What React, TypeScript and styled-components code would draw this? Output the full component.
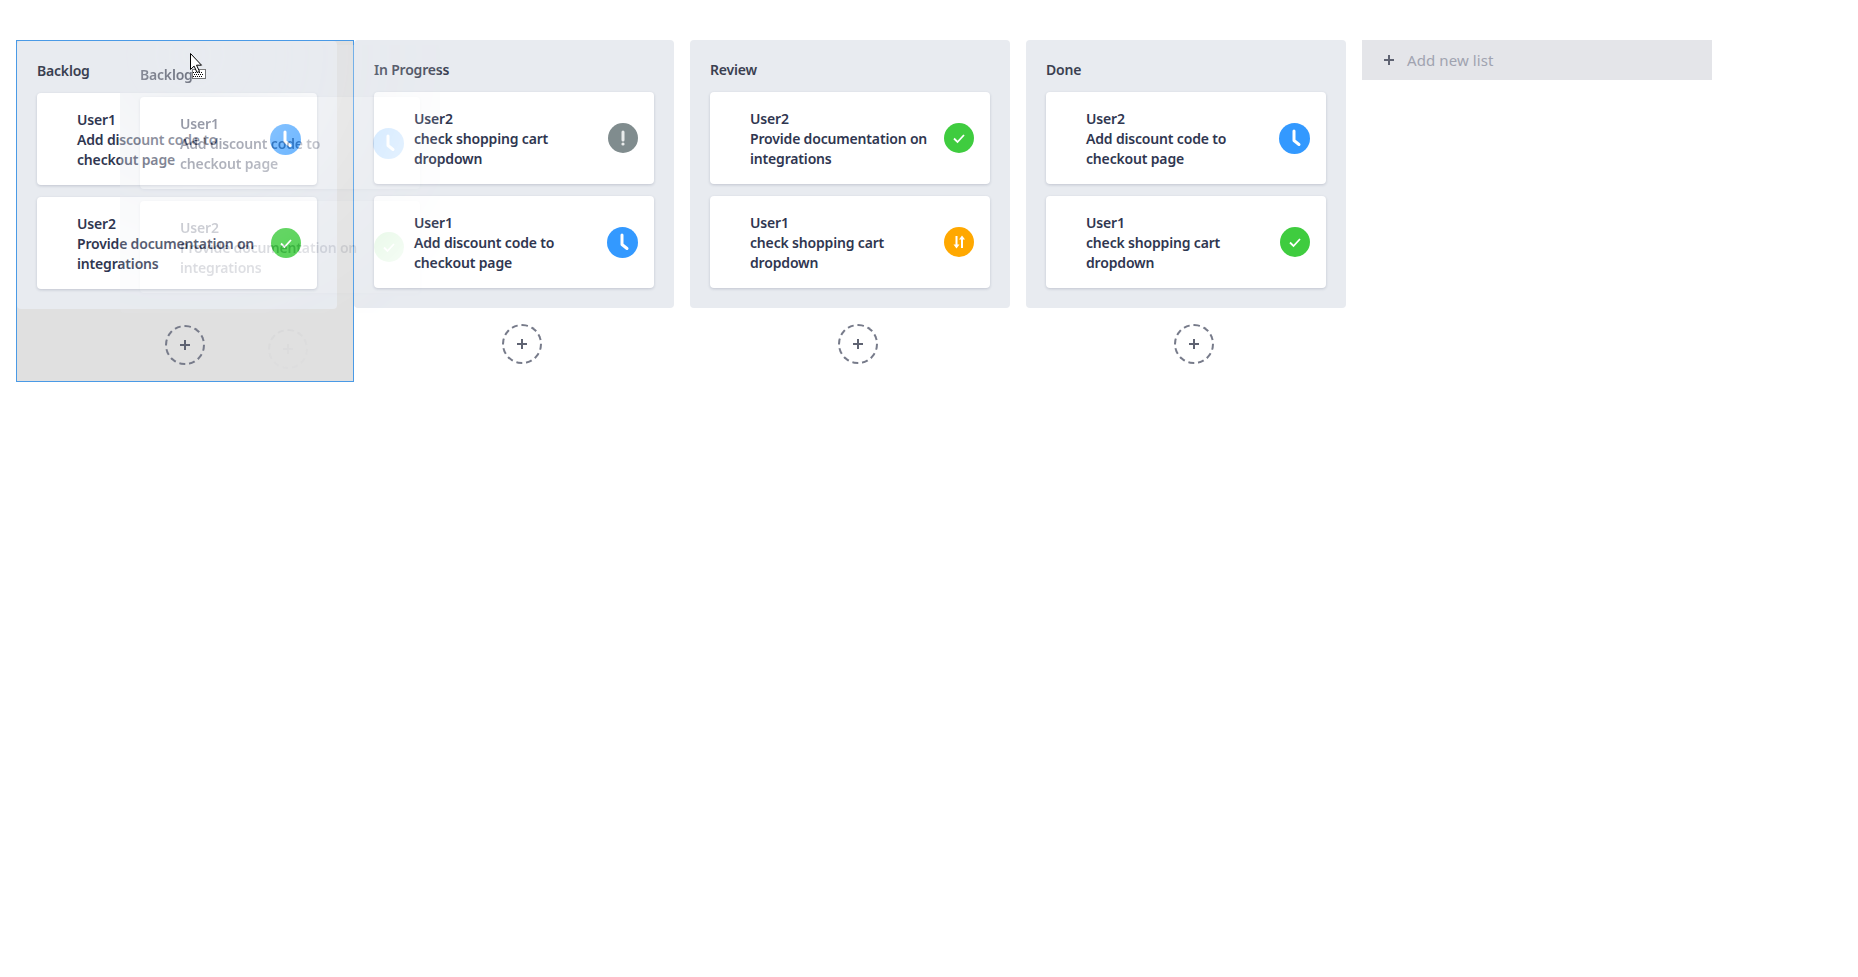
import React from 'react'
import styled, { createGlobalStyle } from 'styled-components'

const GlobalStyle = createGlobalStyle`
	html, body {
		margin: 0;
		background: #fff;
		font-family: "Noto Sans", "Open Sans", sans-serif;
	}
`

const Board = styled.div`
	position: relative;
	display: flex;
	align-items: flex-start;
	min-height: 977px;
	box-sizing: border-box;
	padding: 40px 16px;
	overflow: hidden;
`

const ListSlot = styled.div<{ $dragging?: boolean }>`
	width: 336px;
	flex-shrink: 0;
	${(p) => p.$dragging && 'border: 1px solid #4a9ae6; background: #e0e0e0;'}
`

const Column = styled.div`
	width: 320px;
	box-sizing: border-box;
	padding: 20px;
	background: #e8ebf0;
	border-radius: 4px;
`

const ColumnTitle = styled.div`
	font-size: 14px;
	font-weight: 600;
	line-height: 20px;
	letter-spacing: -0.2px;
	color: #3a3f50;
	margin-bottom: 12px;
`

const Card = styled.div`
	display: flex;
	align-items: center;
	justify-content: space-between;
	height: 92px;
	box-sizing: border-box;
	padding: 16px 16px 16px 40px;
	background: #fff;
	border-radius: 4px;
	box-shadow: 0 1px 3px rgba(40, 50, 80, 0.2);
	& + & {
		margin-top: 12px;
	}
`

const CardText = styled.div`
	width: 190px;
	padding-top: 2px;
	font-size: 14px;
	font-weight: 600;
	line-height: 20px;
	letter-spacing: -0.17px;
	color: #2f3650;
`

const StatusBadge = styled.div<{ $color: string; $size?: number }>`
	display: flex;
	align-items: center;
	justify-content: center;
	flex-shrink: 0;
	width: ${(p) => p.$size || 30}px;
	height: ${(p) => p.$size || 30}px;
	border-radius: 50%;
	background: ${(p) => p.$color};
`

const AddCardButton = styled.div`
	display: flex;
	align-items: center;
	justify-content: center;
	width: 40px;
	height: 40px;
	box-sizing: border-box;
	margin: 16px auto;
	border: 2px dashed #777b8a;
	border-radius: 50%;
	color: #5f6372;
`

const AddListBar = styled.div`
	display: flex;
	align-items: center;
	flex-shrink: 0;
	width: 350px;
	height: 40px;
	box-sizing: border-box;
	padding-left: 21px;
	background: #e4e5e9;
	font-size: 15px;
	letter-spacing: 0.1px;
	color: #a0a3b0;
	svg {
		margin-right: 12px;
		color: #5f6372;
	}
`

// browser drag image: a faded copy of the list that follows the cursor
const DragGhost = styled.div`
	position: absolute;
	left: 120px;
	top: 45px;
	width: 336px;
	pointer-events: none;
	mask-image: radial-gradient(
		circle 340px at 70px 10px,
		rgba(0, 0, 0, 0.74) 0,
		rgba(0, 0, 0, 0.5) 70px,
		rgba(0, 0, 0, 0.34) 130px,
		rgba(0, 0, 0, 0.19) 200px,
		rgba(0, 0, 0, 0.02) 320px
	);
`

const DragCursor = styled.svg`
	position: absolute;
	left: 190px;
	top: 53px;
`

const PlusIcon = () => (
	<svg width="12" height="12" viewBox="0 0 12 12">
		<path d="M6 1v10M1 6h10" stroke="currentColor" strokeWidth="2" fill="none" />
	</svg>
)

const ClockIcon = () => (
	<svg width="31" height="31" viewBox="0 0 31 31">
		<path d="M15 8v9.5l5 4" stroke="#fff" strokeWidth="3" strokeLinecap="round" strokeLinejoin="round" fill="none" />
	</svg>
)

const AlertIcon = () => (
	<svg width="30" height="30" viewBox="0 0 30 30">
		<path d="M15 9v8" stroke="#e9ecec" strokeWidth="3" strokeLinecap="round" fill="none" />
		<circle cx="15" cy="21" r="1.6" fill="#e9ecec" />
	</svg>
)

const CheckIcon = () => (
	<svg width="30" height="30" viewBox="0 0 30 30">
		<path d="M10 15.5l3.5 3.5 6.5-7" stroke="#fff" strokeWidth="1.8" fill="none" />
	</svg>
)

const SwapIcon = () => (
	<svg width="30" height="30" viewBox="0 0 30 30">
		<path d="M12.5 9v10M18 21V11" stroke="#fff" strokeWidth="2" fill="none" />
		<path d="M9.5 17.5h6l-3 4zM15 12.5h6l-3-4z" fill="#fff" />
	</svg>
)

type Status = 'clock' | 'alert' | 'check' | 'swap'

const Badge = ({ status }: { status: Status }) => {
	if (status === 'clock') return <StatusBadge $color="#3399ff" $size={31}><ClockIcon /></StatusBadge>
	if (status === 'alert') return <StatusBadge $color="#808c8e"><AlertIcon /></StatusBadge>
	if (status === 'swap') return <StatusBadge $color="#ffa800"><SwapIcon /></StatusBadge>
	return <StatusBadge $color="#3fcc3f"><CheckIcon /></StatusBadge>
}

const DISCOUNT = 'Add discount code to checkout page'
const DOCS = 'Provide documentation on integrations'
const CART = 'check shopping cart dropdown'

const lists: { title: string; cards: { user: string; text: string; status: Status }[] }[] = [
	{
		title: 'Backlog',
		cards: [
			{ user: 'User1', text: DISCOUNT, status: 'clock' },
			{ user: 'User2', text: DOCS, status: 'check' },
		],
	},
	{
		title: 'In Progress',
		cards: [
			{ user: 'User2', text: CART, status: 'alert' },
			{ user: 'User1', text: DISCOUNT, status: 'clock' },
		],
	},
	{
		title: 'Review',
		cards: [
			{ user: 'User2', text: DOCS, status: 'check' },
			{ user: 'User1', text: CART, status: 'swap' },
		],
	},
	{
		title: 'Done',
		cards: [
			{ user: 'User2', text: DISCOUNT, status: 'clock' },
			{ user: 'User1', text: CART, status: 'check' },
		],
	},
]

const ListContent = ({ list }: { list: (typeof lists)[number] }) => (
	<>
		<Column>
			<ColumnTitle>{list.title}</ColumnTitle>
			{list.cards.map((card) => (
				<Card key={card.user}>
					<CardText>
						<div>{card.user}</div>
						<div>{card.text}</div>
					</CardText>
					<Badge status={card.status} />
				</Card>
			))}
		</Column>
		<AddCardButton>
			<PlusIcon />
		</AddCardButton>
	</>
)

export default function App() {
	return (
		<Board>
			<GlobalStyle />
			{lists.map((list, i) => (
				<ListSlot key={list.title} $dragging={i === 0}>
					<ListContent list={list} />
				</ListSlot>
			))}
			<AddListBar>
				<PlusIcon />
				Add new list
			</AddListBar>
			<DragGhost>
				<ListContent list={lists[0]} />
			</DragGhost>
			<DragCursor width="18" height="26" viewBox="0 0 18 26">
				<rect x="2" y="16" width="13" height="9" fill="#fff" />
				<rect x="2.5" y="16.5" width="13" height="9" fill="none" stroke="#000" strokeDasharray="1 1" />
				<path d="M3 19.5h10M4 21.5h10M3 23.5h10" stroke="#000" strokeDasharray="1 1" />
				<path d="M0.5 0.5v16l3.6-3.4 3 6.4 2.4-1.1-3-6.2h5z" fill="#fff" stroke="#000" />
			</DragCursor>
		</Board>
	)
}
